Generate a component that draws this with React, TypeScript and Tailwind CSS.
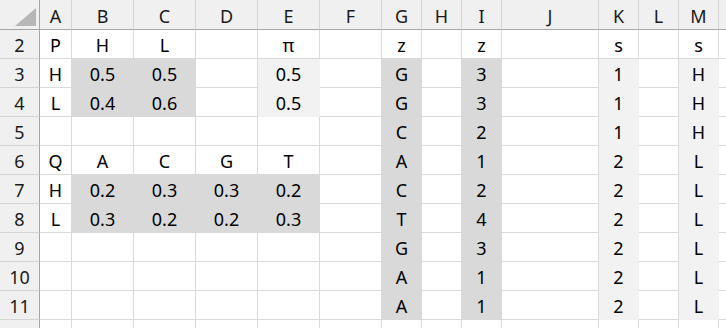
import React from 'react';

const COLS = ['A', 'B', 'C', 'D', 'E', 'F', 'G', 'H', 'I', 'J', 'K', 'L', 'M', 'N'];
const ROWS = [2, 3, 4, 5, 6, 7, 8, 9, 10, 11, 12];

type Fill = 'dark' | 'light' | undefined;

const data: Record<number, Record<string, string>> = {
  2: { A: 'P', B: 'H', C: 'L', E: 'π', G: 'z', I: 'z', K: 's', M: 's' },
  3: { A: 'H', B: '0.5', C: '0.5', E: '0.5', G: 'G', I: '3', K: '1', M: 'H' },
  4: { A: 'L', B: '0.4', C: '0.6', E: '0.5', G: 'G', I: '3', K: '1', M: 'H' },
  5: { G: 'C', I: '2', K: '1', M: 'H' },
  6: { A: 'Q', B: 'A', C: 'C', D: 'G', E: 'T', G: 'A', I: '1', K: '2', M: 'L' },
  7: { A: 'H', B: '0.2', C: '0.3', D: '0.3', E: '0.2', G: 'C', I: '2', K: '2', M: 'L' },
  8: { A: 'L', B: '0.3', C: '0.2', D: '0.2', E: '0.3', G: 'T', I: '4', K: '2', M: 'L' },
  9: { G: 'G', I: '3', K: '2', M: 'L' },
  10: { G: 'A', I: '1', K: '2', M: 'L' },
  11: { G: 'A', I: '1', K: '2', M: 'L' },
};

const fillOf = (row: number, col: string): Fill => {
  if ((row === 3 || row === 4) && (col === 'B' || col === 'C')) return 'dark';
  if ((row === 3 || row === 4) && col === 'E') return 'light';
  if ((row === 7 || row === 8) && ['B', 'C', 'D', 'E'].includes(col)) return 'dark';
  if (row >= 3 && row <= 11 && (col === 'G' || col === 'I')) return 'dark';
  if (row >= 3 && row <= 11 && (col === 'K' || col === 'M')) return 'light';
  return undefined;
};

const Cell: React.FC<{ row: number; col: string }> = ({ row, col }) => {
  const fill = fillOf(row, col);
  const cls =
    fill === 'dark'
      ? 'bg-[#d9d9d9] border-[#d9d9d9]'
      : fill === 'light'
        ? 'bg-[#f2f2f2] border-[#f2f2f2]'
        : 'bg-white border-[#dadada]';
  return (
    <div className={`flex items-center justify-center border-r border-b ${cls} pt-px text-black`}>
      {data[row]?.[col] ?? ''}
    </div>
  );
};

const App: React.FC = () => {
  return (
    <div className="w-[726px] h-[328px] overflow-hidden bg-white font-['Noto_Sans',sans-serif] text-[18px] leading-none">
      <div className="grid grid-cols-[40px_32px_62px_62px_62px_62px_62px_40px_40px_40px_97px_40px_40px_40px_40px] grid-rows-[30px_repeat(11,29px)]">
        <div className="relative bg-[#f0f0f0] border-r border-b border-[#a6a6a6]">
          <svg className="absolute left-[15px] top-[8px]" width="21" height="18" viewBox="0 0 21 18">
            <polygon points="21,0 21,18 0,18" fill="#b7b7b7" />
          </svg>
        </div>
        {COLS.map(c => (
          <div
            key={c}
            className="flex items-center justify-center bg-[#f0f0f0] border-r border-r-[#d4d4d4] border-b border-b-[#a6a6a6] pt-[3px] text-[#1a1a1a]"
          >
            {c === 'N' ? '' : c}
          </div>
        ))}
        {ROWS.map(r => (
          <React.Fragment key={r}>
            <div className="flex items-center justify-center bg-[#f0f0f0] border-r border-r-[#a6a6a6] border-b border-b-[#d4d4d4] pt-px text-[#1a1a1a]">
              {r === 12 ? '' : r}
            </div>
            {COLS.map(c => (
              <Cell key={c} row={r} col={c} />
            ))}
          </React.Fragment>
        ))}
      </div>
    </div>
  );
};

export default App;
